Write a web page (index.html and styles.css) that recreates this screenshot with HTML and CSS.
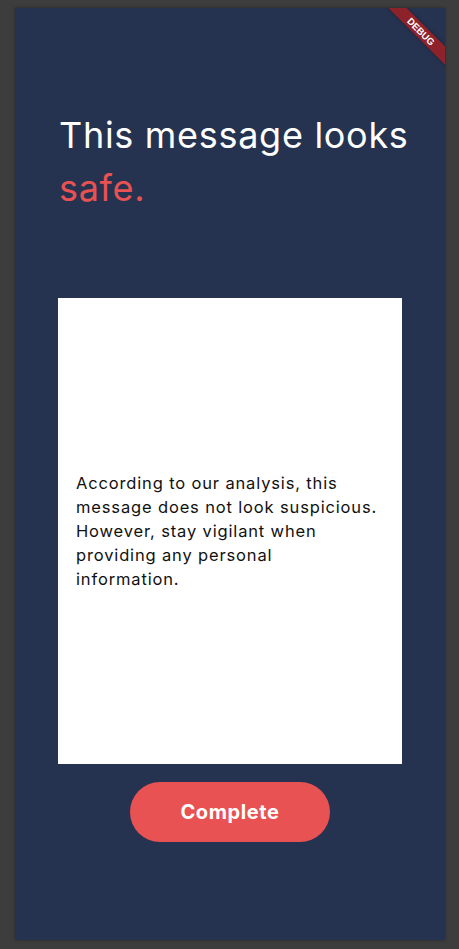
FILE: index.html
```html
<!DOCTYPE html>
<html lang="en">
<head>
<meta charset="utf-8">
<title>Result</title>
<link rel="stylesheet" href="styles.css">
</head>
<body>
<div class="panel">
  <div class="debug-banner"><span>DEBUG</span></div>
  <h1 class="title">This message looks <span class="accent">safe.</span></h1>
  <div class="card">
    <p class="card-text">According to our analysis, this message does not look suspicious. However, stay vigilant when providing any personal information.</p>
  </div>
  <div class="actions">
    <button class="btn" type="button">Complete</button>
  </div>
</div>
</body>
</html>
```
FILE: styles.css
```css
html, body {
  margin: 0;
  padding: 0;
  background: #3d3d3d;
  height: 949px;
  overflow: hidden;
}
body {
  padding: 8px 14px 0 15px;
  box-sizing: border-box;
  font-family: "Inter", "Noto Sans", sans-serif;
}
.panel {
  position: relative;
  overflow: hidden;
  background: #253350;
  height: 932px;
  box-shadow: 0 0 3px rgba(0,0,0,0.35);
  display: flex;
  flex-direction: column;
}
.debug-banner {
  position: absolute;
  top: 23.75px;
  right: 23.75px;
  width: 120px;
  height: 13px;
  margin: -6.5px -60px 0 0;
  background: rgba(183, 28, 28, 0.72);
  box-shadow: 0 0 4px rgba(0,0,0,0.35);
  transform: rotate(45deg);
  display: flex;
  align-items: center;
  justify-content: center;
}
.debug-banner span {
  color: #fff;
  font-family: "Liberation Sans", sans-serif;
  font-weight: 700;
  font-size: 9.5px;
  line-height: 1;
}
.title {
  margin: 101px 0 0 44px;
  font-weight: 400;
  font-size: 36px;
  line-height: 53px;
  letter-spacing: 0.7px;
  color: #ffffff;
  width: 370px;
}
.accent {
  color: #e85252;
}
.card {
  margin: 83px 0 0 43px;
  width: 344px;
  height: 466px;
  background: #ffffff;
  box-sizing: border-box;
  padding: 0 24px 0 18px;
  display: flex;
  align-items: center;
}
.card-text {
  margin: 0;
  font-size: 16.5px;
  line-height: 24px;
  letter-spacing: 0.85px;
  color: #111;
}
.actions {
  display: flex;
  justify-content: center;
  margin-top: 18px;
}
.btn {
  width: 200px;
  height: 60px;
  border: none;
  border-radius: 30px;
  background: #e85252;
  color: #fff;
  font-family: "Inter", "Noto Sans", sans-serif;
  font-weight: 700;
  font-size: 20px;
  letter-spacing: 0.6px;
}
```
